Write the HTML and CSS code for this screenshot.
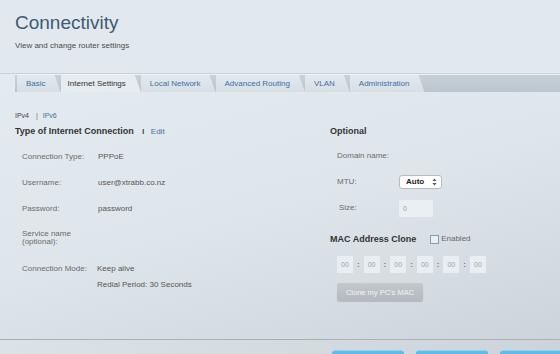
FILE: index.html
```html
<!DOCTYPE html>
<html lang="en">
<head>
  <meta charset="UTF-8">
  <meta name="viewport" content="width=device-width, initial-scale=1.0">
  <title>Connectivity</title>
  <link rel="stylesheet" href="styles.css">
</head>
<body>
  <div class="header">
    <h1>Connectivity</h1>
    <p>View and change router settings</p>
  </div>

  <div class="tabbar">
    <a class="tab">Basic</a>
    <a class="tab active">Internet Settings</a>
    <a class="tab">Local Network</a>
    <a class="tab">Advanced Routing</a>
    <a class="tab">VLAN</a>
    <a class="tab">Administration</a>
  </div>

  <div class="content">
    <div class="ipver">
      <span class="current">IPv4</span>
      <span class="sep">|</span>
      <a class="link">IPv6</a>
    </div>

    <div class="columns">
      <div class="col-left">
        <h2>Type of Internet Connection <span class="bar">I</span> <a class="link edit">Edit</a></h2>

        <div class="row">
          <span class="label">Connection Type:</span>
          <span class="value">PPPoE</span>
        </div>
        <div class="row">
          <span class="label">Username:</span>
          <span class="value">user@xtrabb.co.nz</span>
        </div>
        <div class="row">
          <span class="label">Password:</span>
          <span class="value">password</span>
        </div>
        <div class="row row-tall">
          <span class="label">Service name<br>(optional):</span>
          <span class="value"></span>
        </div>
        <div class="row">
          <span class="label">Connection Mode:</span>
          <div class="value value-mode">
            <span>Keep alive</span>
            <span>Redial Period: 30 Seconds</span>
          </div>
        </div>
      </div>

      <div class="col-right">
        <h2>Optional</h2>

        <div class="row">
          <span class="label short">Domain name:</span>
        </div>
        <div class="row">
          <span class="label short">MTU:</span>
          <div class="select">
            <span>Auto</span>
            <svg width="5" height="8" viewBox="0 0 5 8">
              <path d="M0.5 3 L2.5 0.5 L4.5 3 Z M0.5 5 L2.5 7.5 L4.5 5 Z" fill="#555"/>
            </svg>
          </div>
        </div>
        <div class="row">
          <span class="label short size-label">Size:</span>
          <span class="field">0</span>
        </div>

        <h2 class="mac-title">MAC Address Clone
          <span class="check-wrap"><span class="checkbox"></span>Enabled</span>
        </h2>

        <div class="mac">
          <span class="mac-box">00</span><span class="colon">:</span>
          <span class="mac-box">00</span><span class="colon">:</span>
          <span class="mac-box">00</span><span class="colon">:</span>
          <span class="mac-box">00</span><span class="colon">:</span>
          <span class="mac-box">00</span><span class="colon">:</span>
          <span class="mac-box">00</span>
        </div>

        <button class="clone-btn">Clone my PC's MAC</button>
      </div>
    </div>
  </div>

  <div class="footer">
    <button class="btn"></button>
    <button class="btn"></button>
    <button class="btn"></button>
  </div>
</body>
</html>
```

FILE: styles.css
```css
html, body {
  overflow: hidden;
}
body {
  margin: 0;
  font-family: "Liberation Sans", Arial, sans-serif;
  color: #555;
  background: linear-gradient(165deg, #e6edf2 0%, #dfe6eb 55%, #cbd3d9 100%);
  height: 354px;
}
.header {
  height: 73px;
  padding-left: 15px;
  background: #e1e9ef;
  border-bottom: 1px solid #c9d2d9;
  overflow: hidden;
}
.header h1 {
  margin: 12px 0 0;
  font-size: 19px;
  line-height: 22px;
  font-weight: normal;
  color: #3f5a72;
}
.header p {
  margin: 7px 0 0;
  font-size: 8px;
  line-height: 10px;
  color: #4a4a4a;
}
.tabbar {
  display: flex;
  margin-left: 15px;
  padding-left: 2px;
  height: 17px;
  background: linear-gradient(#c7d1d8, #bac5cd);
  border-top: 1px solid #eef3f6;
}
.tab {
  display: block;
  padding: 0 15px 0 9px;
  font-size: 8px;
  line-height: 17px;
  color: #3d6fa3;
  background: linear-gradient(#e3eaef, #d6dfe5);
  clip-path: polygon(0 0, calc(100% - 6px) 0, 100% 100%, 0 100%);
}
.tab.active {
  color: #333;
  background: #e6ecf0;
  padding-left: 7px;
}
.content {
  height: 247px;
  padding-left: 15px;
  box-sizing: border-box;
  padding-top: 19px;
}
.ipver {
  font-size: 7px;
  line-height: 9px;
  color: #444;
}
.ipver .sep {
  margin: 0 3px 0 5px;
  color: #666;
}
.link {
  color: #3d6fa3;
}
.columns {
  display: flex;
}
.col-left {
  width: 315px;
}
h2 {
  margin: 5px 0 14px;
  font-size: 9px;
  line-height: 12px;
  color: #333;
}
h2 .bar {
  margin: 0 4px 0 6px;
  font-size: 7px;
}
h2 .edit {
  font-weight: normal;
  font-size: 8px;
}
.row {
  display: flex;
  height: 26px;
  font-size: 8px;
  line-height: 10px;
  padding-left: 7px;
}
.row:nth-child(4) {
  height: 25px;
}
.row-tall {
  height: 35px;
}
.row-tall .label {
  line-height: 8px;
  padding-top: 1px;
}
.label {
  width: 76px;
  flex: none;
  color: #6b6b6b;
}
.label.short {
  width: 62px;
}
.size-label {
  padding-left: 2px;
  width: 60px !important;
}
.value {
  color: #555;
}
.value-mode {
  display: flex;
  flex-direction: column;
  gap: 6px;
  margin-left: -1px;
}
.select {
  display: flex;
  align-items: center;
  justify-content: space-between;
  width: 43px;
  height: 14px;
  margin-top: -2px;
  padding: 0 4px 0 6px;
  box-sizing: border-box;
  background: #fff;
  border: 1px solid #b9bcbf;
  border-radius: 3px;
  font-weight: bold;
  color: #222;
}
.field {
  width: 34px;
  height: 17px;
  margin-top: -3px;
  padding-left: 4px;
  box-sizing: border-box;
  line-height: 17px;
  font-size: 7px;
  background: #eaeff2;
  color: #9aa3a9;
}
.mac-title {
  margin: 5px 0 11px;
  display: flex;
  align-items: center;
}
.check-wrap {
  display: flex;
  align-items: center;
  margin-left: 14px;
  font-weight: normal;
  font-size: 8px;
  color: #666;
}
.checkbox {
  width: 7px;
  height: 7px;
  margin-right: 2px;
  border: 1px solid #8f9aa3;
  background: #e3f1f8;
}
.mac {
  display: flex;
  align-items: center;
  padding-left: 7px;
}
.mac-box {
  width: 16px;
  height: 17px;
  line-height: 17px;
  text-align: center;
  font-size: 7px;
  background: #e9eef2;
  color: #9aa3a9;
}
.colon {
  width: 10.6px;
  text-align: center;
  font-size: 8px;
  font-weight: bold;
  color: #777;
}
.clone-btn {
  display: block;
  margin: 10px 0 0 7px;
  width: 86px;
  height: 18px;
  padding: 0;
  border: none;
  border-radius: 2px;
  font-family: "Liberation Sans", Arial, sans-serif;
  font-size: 7.5px;
  color: #f4f4f4;
  background: linear-gradient(#c3c8cc, #b3b9be);
  box-shadow: 0 1px 1px rgba(0, 0, 0, 0.15);
}
.footer {
  display: flex;
  justify-content: flex-end;
  gap: 12px;
  margin-right: -12px;
  padding-top: 10px;
  border-top: 1px solid #a9b2b8;
  background: linear-gradient(90deg, #dce3e7, #cdd4d9);
  height: 20px;
}
.btn {
  width: 72px;
  height: 20px;
  border: none;
  border-top: 1px solid #93d3f2;
  border-radius: 3px 3px 0 0;
  background: linear-gradient(#62bde9, #4eaee0);
}
```
